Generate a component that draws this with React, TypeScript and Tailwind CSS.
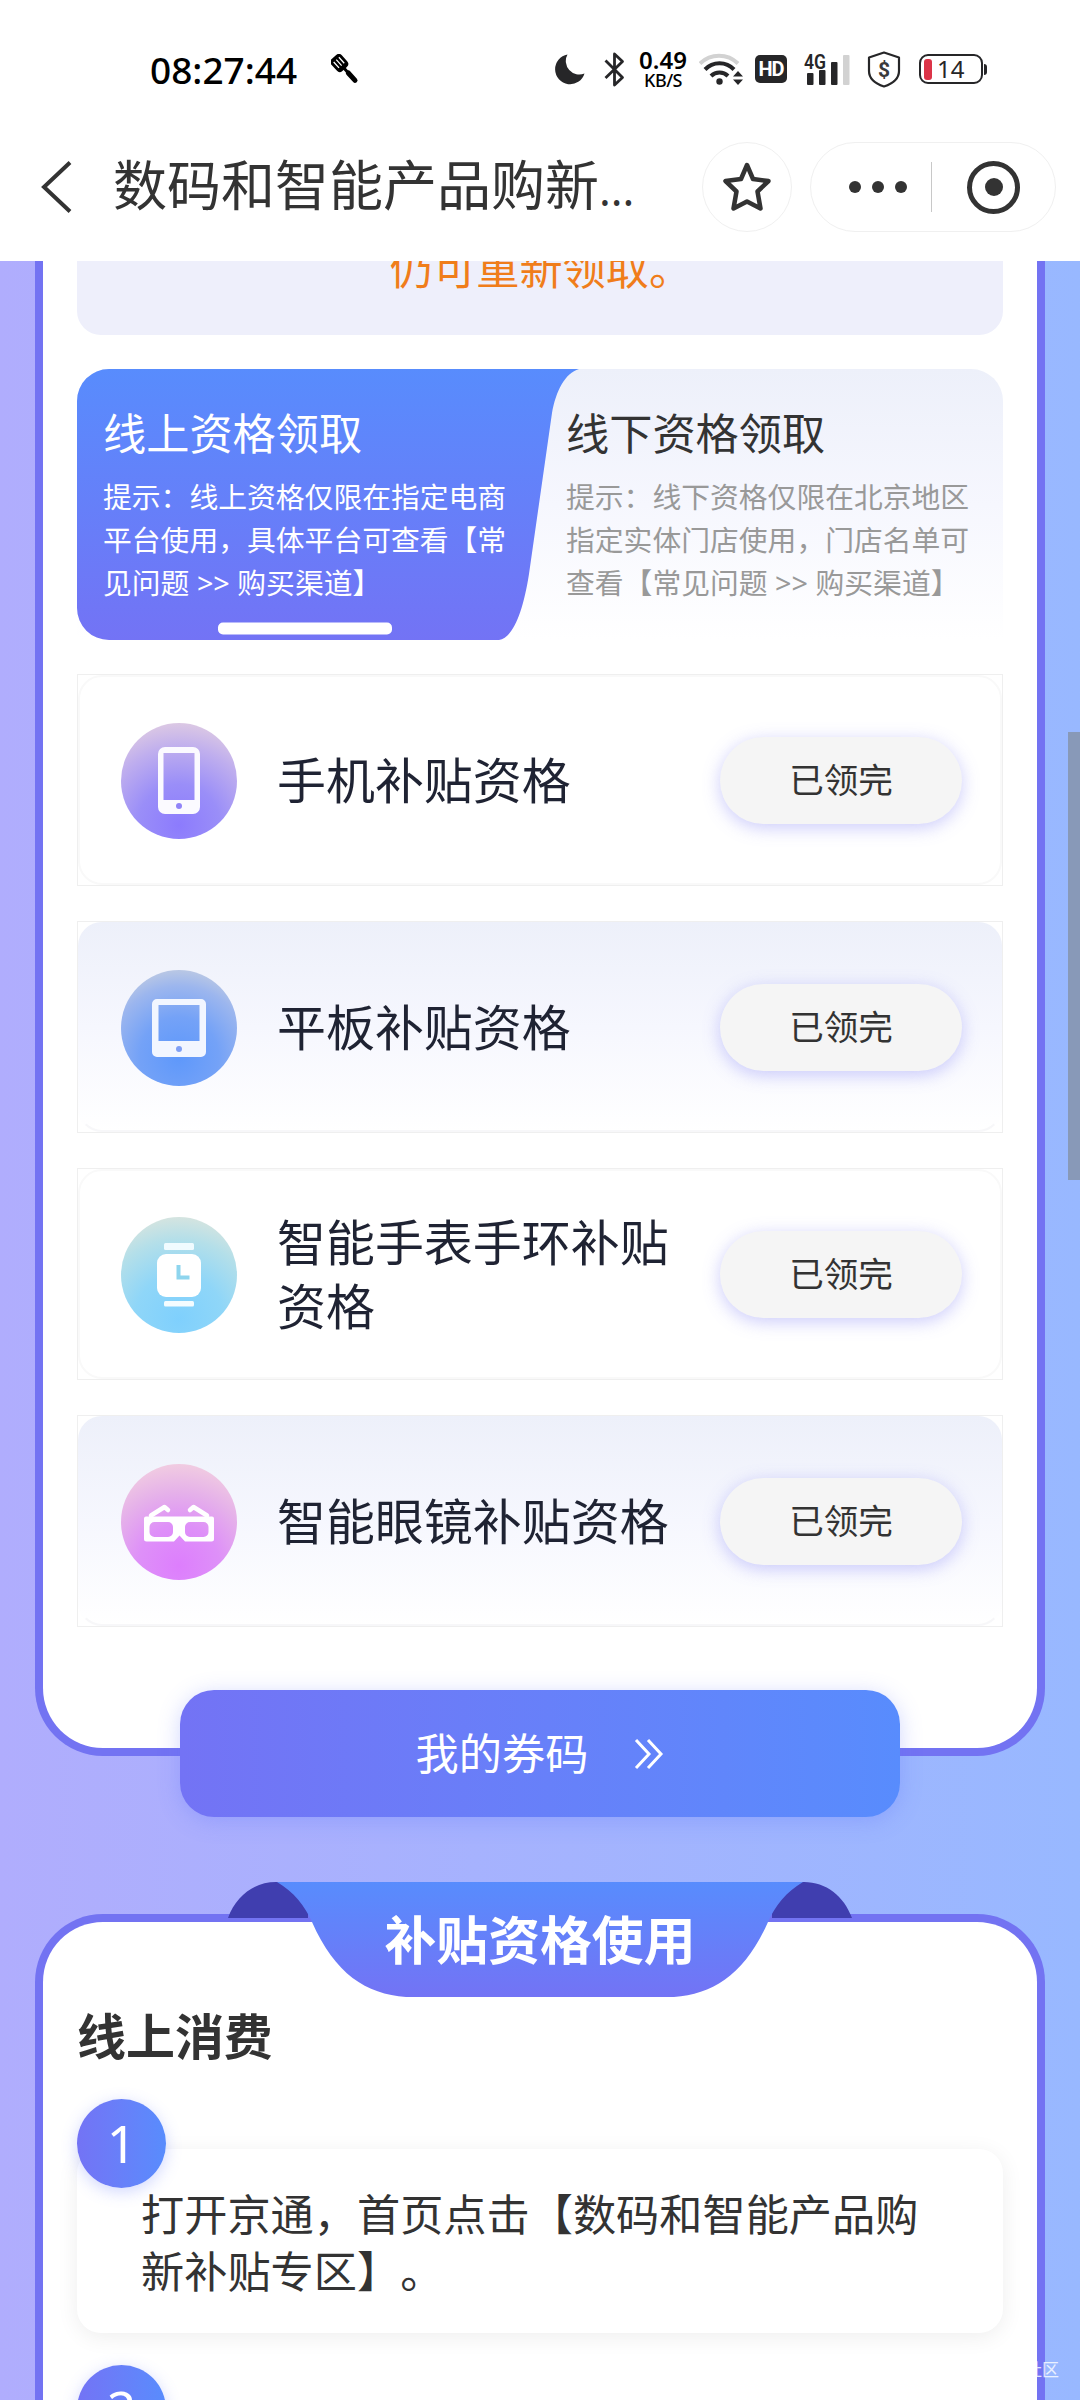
import type { ReactNode } from 'react'
import clsx from 'clsx'

interface Quota {
  id: string
  title: string
  icon: ReactNode
  iconBg: string
  tinted: boolean
}

interface UsageStep {
  no: number
  text: string
}

const quotas: Quota[] = [
  {
    id: 'phone',
    title: '手机补贴资格',
    icon: <PhoneIcon />,
    iconBg: 'bg-[radial-gradient(circle_at_50%_88%,#8c7bfd_0%,#9a8ef8_35%,#bfaeee_66%,#e6d2e0_95%)]',
    tinted: false
  },
  {
    id: 'tablet',
    title: '平板补贴资格',
    icon: <TabletIcon />,
    iconBg: 'bg-[radial-gradient(circle_at_50%_75%,#5e98fb_0%,#74a2f7_38%,#9cb6ee_68%,#c6cfe0_90%)]',
    tinted: true
  },
  {
    id: 'watch',
    title: '智能手表手环补贴资格',
    icon: <WatchIcon />,
    iconBg: 'bg-[radial-gradient(circle_at_50%_88%,#7fd0fd_0%,#8fd6f8_38%,#b4dfe9_68%,#e2e6dc_95%)]',
    tinted: false
  },
  {
    id: 'glasses',
    title: '智能眼镜补贴资格',
    icon: <GlassesIcon />,
    iconBg: 'bg-[radial-gradient(circle_at_50%_88%,#dd7efd_0%,#de90f8_35%,#e5b0ea_62%,#f2cfe0_90%)]',
    tinted: true
  }
]

const usageSteps: UsageStep[] = [
  { no: 1, text: '打开京通，首页点击【数码和智能产品购新补贴专区】。' },
  { no: 2, text: '' }
]

function PhoneIcon() {
  return (
    <svg width="42" height="67" viewBox="0 0 42 67">
      <path
        fill="#fbfaff"
        fillRule="evenodd"
        d="M7 0h28a7 7 0 0 1 7 7v53a7 7 0 0 1-7 7H7a7 7 0 0 1-7-7V7a7 7 0 0 1 7-7ZM5.500 6v47h31V6Z"
      />
      <circle cx="21" cy="59" r="3" fill="#9184f8" />
    </svg>
  )
}

function TabletIcon() {
  return (
    <svg width="54" height="58" viewBox="0 0 54 58">
      <path
        fill="#f2f6ff"
        fillRule="evenodd"
        d="M5 0h44a5 5 0 0 1 5 5v48a5 5 0 0 1-5 5H5a5 5 0 0 1-5-5V5a5 5 0 0 1 5-5ZM6.500 6v36h41V6Z"
      />
      <circle cx="27" cy="50" r="3" fill="#7f9ff5" />
    </svg>
  )
}

function WatchIcon() {
  return (
    <svg width="46" height="64" viewBox="0 0 46 64">
      <rect x="8" y="0" width="30" height="7" rx="1.500" fill="#f0fbff" />
      <rect x="1" y="11" width="44" height="43" rx="9" fill="#fff" />
      <rect x="8" y="58" width="30" height="5.500" rx="1.500" fill="#f4fcff" />
      <path d="M22.500 22v12.500h11" fill="none" stroke="#8ed5ee" strokeWidth="4" />
    </svg>
  )
}

function GlassesIcon() {
  return (
    <svg width="70" height="38" viewBox="0 0 70 38" className="mt-[3px]">
      <g fill="none" stroke="#fff" strokeWidth="4.500" strokeLinecap="round" strokeLinejoin="round">
        <path d="M7 11.500 20.500 3 24 6M63 11.500 49.500 3 46 6" />
      </g>
      <path
        fill="#fff"
        fillRule="evenodd"
        d="M2 12.500H68a2 2 0 0 1 2 2V35a2.500 2.500 0 0 1-2.500 2.500H41L35.500 31.500 30 37.500H2.500A2.500 2.500 0 0 1 0 35V14.500a2 2 0 0 1 2-2ZM10.500 18a5 5 0 0 0-5 5v5a5 5 0 0 0 5 5h13.500a5 5 0 0 0 5-5v-5a5 5 0 0 0-5-5ZM46 18a5 5 0 0 0-5 5v5a5 5 0 0 0 5 5h13.500a5 5 0 0 0 5-5v-5a5 5 0 0 0-5-5Z"
      />
    </svg>
  )
}

function StatusBar() {
  return (
    <div className="flex h-[138px] items-center text-black">
      <span className="ml-[150px] w-[149px] text-[37px] leading-none font-medium whitespace-nowrap">08:27:44</span>
      {/* 锅铲图标 */}
      <svg className="ml-[32px]" width="28" height="30" viewBox="0 0 28 30">
        <g transform="rotate(-42 9 9)">
          <rect x="1.500" y="0.500" width="14" height="16" rx="4" fill="#000" />
          <path d="M5 4v8M8.500 4v8M12 4v8" stroke="#fff" strokeWidth="1.300" />
          <path d="M8.500 15v17" stroke="#000" strokeWidth="3" strokeLinecap="round" />
          <path d="M8.500 22v10" stroke="#000" strokeWidth="5" strokeLinecap="round" />
        </g>
      </svg>

      <div className="ml-[196px] flex items-center">
        <svg width="30" height="31" viewBox="0 0 30 31">
          <path d="M12.500 0.500A15 15 0 1 0 29.500 19.500 A13.500 13.500 0 0 1 12.500 0.500Z" fill="#262628" />
        </svg>
        <svg className="ml-[19px]" width="21" height="35" viewBox="0 0 21 35">
          <path
            d="M1.500 8.500 18.500 25.500 10.500 33V2l8 7.500L1.500 26"
            fill="none"
            stroke="#262628"
            strokeWidth="2.800"
            strokeLinejoin="round"
          />
        </svg>
        <div className="ml-[11px] flex w-[54px] flex-col items-center font-semibold">
          <span className="text-[24px] leading-[22px]">0.49</span>
          <span className="text-[18px] leading-[18px] font-medium tracking-[-0.5px]">KB/S</span>
        </div>
        <svg className="ml-[9px]" width="45" height="34" viewBox="0 0 45 34">
          <g fill="none" strokeWidth="4">
            <path d="M1 11.500a27 27 0 0 1 38 0" stroke="#d2d2d2" />
            <path d="M6 17.500a20 20 0 0 1 29 0" stroke="#262628" />
            <path d="M12 24a12 12 0 0 1 17 0" stroke="#262628" />
          </g>
          <circle cx="20.500" cy="29.500" r="3.200" fill="#262628" />
          <path d="M39 19l5 5.500H34zM39 33l5-5.500H34z" fill="#262628" />
        </svg>
        <span className="ml-[11px] flex h-[28px] w-[32px] items-center justify-center rounded-[5px] bg-[#262628] font-['Roboto','Noto_Sans',sans-serif] text-[20px] leading-none font-bold tracking-[-1px] text-white">
          HD
        </span>
        <svg className="ml-[16px]" width="48" height="34" viewBox="0 0 48 34">
          <text x="1" y="17" fontSize="20" fontWeight="600" textLength="22" lengthAdjust="spacingAndGlyphs" fill="#262628" fontFamily="Roboto, 'Noto Sans', sans-serif">
            4G
          </text>
          <rect x="4" y="21" width="6.500" height="12" rx="1" fill="#262628" />
          <rect x="16" y="18" width="6.500" height="15" rx="1" fill="#262628" />
          <rect x="28" y="10" width="6.500" height="23" rx="1" fill="#262628" />
          <rect x="40" y="3" width="6.500" height="30" rx="1" fill="#d2d2d2" />
        </svg>
        <svg className="ml-[16px]" width="34" height="37" viewBox="0 0 34 37">
          <path
            d="M17 1.500 32 6.500V20c0 7.500-6 12.500-15 15.500C8 32.500 2 27.500 2 20V6.500Z"
            fill="none"
            stroke="#262628"
            strokeWidth="2.200"
            strokeLinejoin="round"
          />
          <text x="17" y="25.500" fontSize="21" fontWeight="700" textAnchor="middle" fill="#3a3a3c" fontFamily="Roboto, 'Noto Sans', sans-serif">
            $
          </text>
        </svg>
        <div className="ml-[18px] flex items-center">
          <div className="flex h-[30px] w-[64px] items-center rounded-[9px] border-[2.5px] border-[#262628] pl-[3px]">
            <span className="h-[21px] w-[8px] rounded-[3px] bg-[#dc3448]" />
            <span className="ml-[5px] text-[24px] leading-none text-[#262628]">14</span>
          </div>
          <span className="ml-px h-[11px] w-[2.5px] rounded-r-sm bg-[#262628]" />
        </div>
      </div>
    </div>
  )
}

function NavBar() {
  return (
    <div className="mt-[2px] mb-[27px] flex h-[94px] items-center">
      <svg className="ml-[40px]" width="34" height="52" viewBox="0 0 34 52">
        <path d="M30 1.500 4 26 30 50.500" fill="none" stroke="#333" strokeWidth="4" />
      </svg>
      <h1 className="ml-[39px] w-[561px] text-[54px] leading-[80px] whitespace-nowrap text-[#333]">
        数码和智能产品购新<span className="text-[44px]">...</span>
      </h1>
      <div className="ml-[28px] flex h-[90px] w-[90px] items-center justify-center rounded-full border-[1.5px] border-[#f0f0f0]">
        <svg width="50" height="52" viewBox="0 0 50 52">
          <path
            d="M25 4 31 18 46.500 20 35.500 30.500 38.500 47.500 25 40.500 11.500 47.500 14.500 30.500 3.500 20 19 18Z"
            fill="none"
            stroke="#333"
            strokeWidth="4.500"
            strokeLinejoin="round"
          />
        </svg>
      </div>
      <div className="ml-[18px] flex h-[90px] w-[246px] items-center rounded-full border-[1.5px] border-[#f0f0f0]">
        <div className="ml-[38px] flex gap-[11px]">
          <span className="size-[12px] rounded-full bg-[#333]" />
          <span className="size-[12px] rounded-full bg-[#333]" />
          <span className="size-[12px] rounded-full bg-[#333]" />
        </div>
        <span className="ml-[24px] h-[50px] w-px bg-[#c8c8c8]" />
        <div className="ml-[35px] flex size-[53px] items-center justify-center rounded-full border-[5.5px] border-[#333]">
          <span className="size-[18px] rounded-full bg-[#333]" />
        </div>
      </div>
    </div>
  )
}

function ChannelTabs() {
  return (
    <div className="relative mt-[34px] h-[271px] rounded-t-[32px] bg-linear-to-b from-[#edf0fa] via-[#f6f7fe] to-white">
      {/* 选中态的斜边背景 */}
      <svg className="absolute top-0 left-0" width="502" height="271" viewBox="0 0 502 271">
        <defs>
          <linearGradient id="tab" x1="0" y1="0" x2="0" y2="1">
            <stop offset="0" stopColor="#588cfd" />
            <stop offset="1" stopColor="#7373f5" />
          </linearGradient>
        </defs>
        <path
          fill="url(#tab)"
          d="M32 0H502C488 4 479 22 475 44L452 205C446 243 436 269 422 271H32A32 32 0 0 1 0 239V32A32 32 0 0 1 32 0Z"
        />
        <rect x="141" y="253.500" width="174" height="12" rx="5" fill="#fff" />
      </svg>
      <div className="relative flex pt-[33px]">
        <div className="w-[463px] pl-[26px] text-white">
          <h2 className="text-[43.2px] leading-[64px]">线上资格领取</h2>
          <p className="mt-[9px] w-[405px] text-[28.8px] leading-[43.2px]">
            提示：线上资格仅限在指定电商平台使用，具体平台可查看【常见问题 &gt;&gt; 购买渠道】
          </p>
        </div>
        <div className="pl-[26px]">
          <h2 className="text-[43.2px] leading-[64px] text-[#333]">线下资格领取</h2>
          <p className="mt-[9px] w-[405px] text-[28.8px] leading-[43.2px] text-[#999]">
            提示：线下资格仅限在北京地区指定实体门店使用，门店名单可查看【常见问题 &gt;&gt; 购买渠道】
          </p>
        </div>
      </div>
    </div>
  )
}

function QuotaRow({ quota }: { quota: Quota }) {
  return (
    <li className="h-[212px] border border-[#efefef]">
      <div
        className={clsx(
          'flex h-full items-center rounded-[24px] border-2 pt-px pr-[38px] pl-[41px]',
          quota.tinted
            ? 'border-transparent border-b-[#f7f7f9] bg-linear-to-b from-[#edf0fa] via-[#f6f7fe] to-white bg-origin-border'
            : 'border-[#f9f9f9]'
        )}
      >
        <div className={clsx('flex size-[116px] shrink-0 items-center justify-center rounded-full', quota.iconBg)}>
          {quota.icon}
        </div>
        <h3 className="ml-[40px] w-[400px] text-[48.96px] leading-[63.6px] text-[#1f2333]">{quota.title}</h3>
        <button className="ml-auto h-[87px] w-[242px] rounded-full bg-[#f5f5f5] text-[34.56px] leading-none text-[#333] shadow-[0_4px_17px_rgba(115,115,244,0.36)]">
          已领完
        </button>
      </div>
    </li>
  )
}

function Ribbon() {
  return (
    <div className="relative mx-auto -mt-[40px] h-[115px] w-[624px]">
      <svg className="absolute inset-0" width="624" height="115" viewBox="0 0 624 115">
        <defs>
          <linearGradient id="ribbon" x1="0" y1="0" x2="0" y2="1">
            <stop offset="0" stopColor="#588cfd" />
            <stop offset="1" stopColor="#7373f5" />
          </linearGradient>
        </defs>
        <path d="M0 36C8 14 26 0 48 0H80V36ZM624 36C616 14 598 0 576 0H544V36Z" fill="#403eaf" />
        <path
          d="M49 0H575C558 10 547 24 540 40C517 92 486 112 446 115H178C138 112 107 92 84 40C77 24 66 10 49 0Z"
          fill="url(#ribbon)"
        />
      </svg>
      <h2 className="relative text-center text-[51.84px] leading-[116px] font-bold text-white">补贴资格使用</h2>
    </div>
  )
}

function StepItem({ step }: { step: UsageStep }) {
  return (
    <li>
      <div className="relative z-10 -mb-[39px] flex size-[89px] items-center justify-center rounded-full bg-linear-to-r from-[#7373f5] to-[#588cfd] text-[51.84px] leading-none text-white shadow-[0_4px_16px_rgba(88,110,253,0.28)]">
        {step.no}
      </div>
      <p className="h-[184px] rounded-[24px] bg-white pt-[37px] pr-[80px] pl-[64px] text-[43.2px] leading-[57.4px] text-[#333] shadow-[0_4px_22px_rgba(0,0,0,0.07)]">
        {step.text}
      </p>
    </li>
  )
}

export default function App() {
  return (
    <div
      lang="zh-CN"
      className="h-[2400px] w-[1080px] overflow-hidden bg-white font-['Noto_Sans','Noto_Sans_CJK_SC',sans-serif] [text-spacing-trim:space-all]"
    >
      <header>
        <StatusBar />
        <NavBar />
      </header>

      <main className="relative h-[2139px] overflow-hidden bg-linear-to-r from-[#b0adfd] to-[#98b8ff]">
        {/* 资格领取 */}
        <section className="mx-[35px] h-[1495px] rounded-b-[68px] border-8 border-t-0 border-[#7373f2] bg-white px-[34px]">
          <div className="h-[74px] overflow-hidden rounded-b-[24px] bg-[#eeeffb]">
            <p className="-mt-[24px] pl-[2px] text-center text-[43.2px] leading-[64px] text-[#f07d1a]">仍可重新领取。</p>
          </div>
          <ChannelTabs />
          <ul className="mt-[34px] flex flex-col gap-[35px]">
            {quotas.map(quota => (
              <QuotaRow key={quota.id} quota={quota} />
            ))}
          </ul>
          <button className="mx-auto mt-[63px] flex h-[127px] w-[720px] items-center justify-center rounded-[34px] bg-linear-to-r from-[#7373f5] to-[#588cfd] text-[43.2px] leading-none text-white shadow-[0_4px_22px_rgba(88,110,253,0.28)]">
            我的券码
            <svg className="ml-[46px]" width="30" height="32" viewBox="0 0 30 32">
              <path d="M2 2 15 16 2 30M14 2 27 16 14 30" fill="none" stroke="#fff" strokeWidth="3" />
            </svg>
          </button>
        </section>

        {/* 资格使用 */}
        <section className="mx-[35px] mt-[158px] h-[700px] rounded-t-[68px] border-8 border-b-0 border-[#7373f2] bg-white px-[34px]">
          <Ribbon />
          <h3 className="mt-[9px] text-[48.96px] leading-[60px] font-bold text-[#333]">线上消费</h3>
          <ol className="mt-[33px] flex flex-col gap-[32px]">
            {usageSteps.map(step => (
              <StepItem key={step.no} step={step} />
            ))}
          </ol>
        </section>

        {/* 滚动条 */}
        <div className="absolute top-[471px] right-0 h-[448px] w-[12px] bg-[#8899b8]" />
        <span className="absolute right-[21px] bottom-[18px] text-[17px] leading-[24px] text-white/80">社区</span>
      </main>
    </div>
  )
}
